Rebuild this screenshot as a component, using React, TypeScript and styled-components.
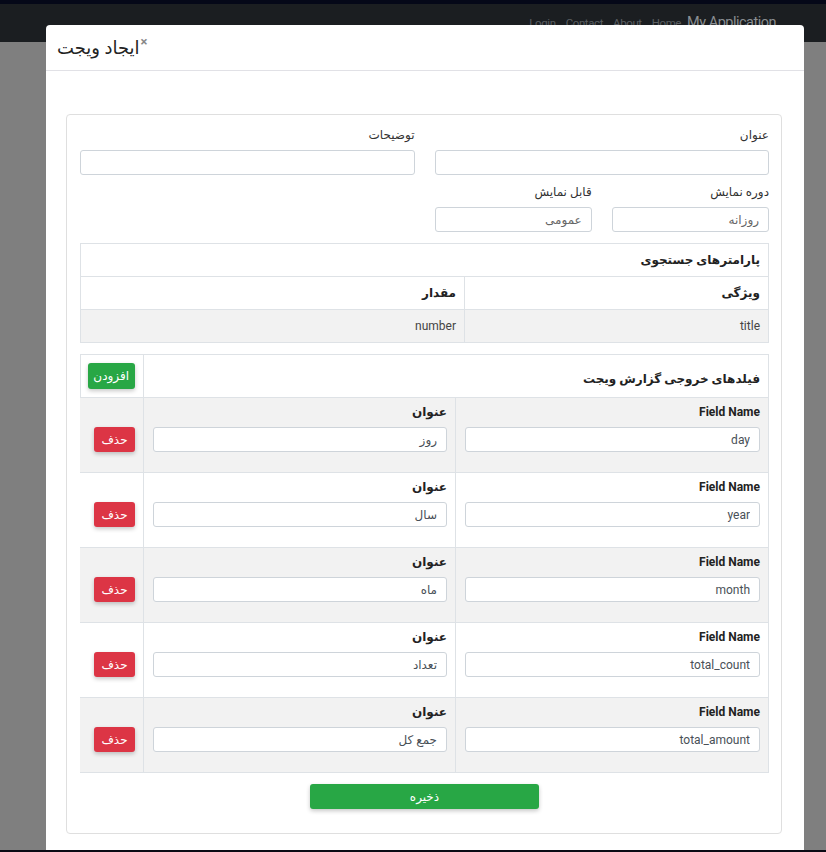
import styled, { createGlobalStyle } from "styled-components";

const GlobalStyle = createGlobalStyle`
  html, body {
    margin: 0;
    padding: 0;
    height: 852px;
    overflow: hidden;
    background: #7f7f7f;
    font-family: "Roboto", "DejaVu Sans", sans-serif;
  }
  * {
    box-sizing: border-box;
  }
`;

const outputFields = [
  { name: "day", title: "روز" },
  { name: "year", title: "سال" },
  { name: "month", title: "ماه" },
  { name: "total_count", title: "تعداد" },
  { name: "total_amount", title: "جمع کل" },
];

function App() {
  return (
    <>
      <GlobalStyle />
      <NavBar>
        <NavLinks>
          <NavLink>Login</NavLink>
          <NavLink>Contact</NavLink>
          <NavLink>About</NavLink>
          <NavLink>Home</NavLink>
          <Brand>My Application</Brand>
        </NavLinks>
      </NavBar>

      <Modal>
        <ModalHeader>
          <ModalTitle>ایجاد ویجت</ModalTitle>
          <CloseButton>×</CloseButton>
        </ModalHeader>

        <ModalBody dir="rtl">
          <Card>
            <FormGrid>
              <Field $span={2}>
                <Label>عنوان</Label>
                <Input />
              </Field>
              <Field $span={2}>
                <Label>توضیحات</Label>
                <Input />
              </Field>
              <Field>
                <Label>دوره نمایش</Label>
                <Input $muted defaultValue="روزانه" />
              </Field>
              <Field>
                <Label>قابل نمایش</Label>
                <Input $muted defaultValue="عمومی" />
              </Field>
            </FormGrid>

            <ParamTable>
              <ParamCaption>پارامترهای جستجوی</ParamCaption>
              <ParamCell $head>ویژگی</ParamCell>
              <ParamCell $head>مقدار</ParamCell>
              <ParamCell $striped>title</ParamCell>
              <ParamCell $striped>number</ParamCell>
            </ParamTable>

            <FieldsTable>
              <FieldsCaption>فیلدهای خروجی گزارش ویجت</FieldsCaption>
              <ActionCell $head>
                <AddButton>افزودن</AddButton>
              </ActionCell>

              {outputFields.map((item, index) => (
                <FieldRow key={item.name} $striped={index % 2 === 0}>
                  <RowCell>
                    <CellLabel>Field Name</CellLabel>
                    <Input defaultValue={item.name} />
                  </RowCell>
                  <RowCell>
                    <CellLabel>عنوان</CellLabel>
                    <Input defaultValue={item.title} />
                  </RowCell>
                  <ActionCell>
                    <DeleteButton>حذف</DeleteButton>
                  </ActionCell>
                </FieldRow>
              ))}
            </FieldsTable>

            <SaveRow>
              <SaveButton>ذخیره</SaveButton>
            </SaveRow>
          </Card>
        </ModalBody>
      </Modal>

      <BottomStrip />
    </>
  );
}

export default App;

const NavBar = styled.nav`
  height: 42px;
  background: #1b1e21;
  border-top: 4px solid #050818;
  display: flex;
  justify-content: flex-end;
  align-items: flex-start;
  padding: 10px 50px 0 0;
`;

const NavLinks = styled.div`
  display: flex;
  align-items: baseline;
  gap: 10px;
`;

const NavLink = styled.span`
  font-size: 11.5px;
  letter-spacing: -0.4px;
  color: #5a5e62;
`;

const Brand = styled.span`
  font-size: 14.5px;
  letter-spacing: -0.5px;
  color: #8a8e92;
  margin-left: -4px;
`;

const Modal = styled.div`
  position: absolute;
  left: 46px;
  top: 25px;
  width: 758px;
  height: 840px;
  background: #ffffff;
  border-radius: 4px 4px 0 0;
`;

const ModalHeader = styled.div`
  height: 46px;
  padding: 0 11px;
  display: flex;
  align-items: center;
  border-bottom: 1px solid #e1e1e6;
`;

const ModalTitle = styled.h5`
  margin: 0;
  font-size: 18px;
  font-weight: 500;
  color: #222;
`;

const CloseButton = styled.span`
  align-self: flex-start;
  margin-top: 10px;
  margin-left: 1px;
  font-size: 13px;
  font-weight: 700;
  color: #888;
  line-height: 1;
`;

const ModalBody = styled.div`
  padding: 43px 22px 0 20px;
`;

const Card = styled.div`
  border: 1px solid #dfdfdf;
  border-radius: 4px;
  padding: 12px 12px 24px 13px;
`;

const FormGrid = styled.div`
  display: grid;
  grid-template-columns: repeat(4, 1fr);
  column-gap: 20px;
  row-gap: 9px;
`;

const Field = styled.div<{ $span?: number }>`
  grid-column: span ${(p) => p.$span ?? 1};
  display: flex;
  flex-direction: column;
`;

const Label = styled.label`
  font-size: 12px;
  line-height: 16px;
  color: #333;
  margin-bottom: 7px;
`;

const Input = styled.input<{ $muted?: boolean }>`
  height: 25px;
  width: 100%;
  border: 1px solid #ced4da;
  border-radius: 3px;
  background: #fff;
  padding: 0 9px;
  font-family: inherit;
  font-size: 12px;
  color: ${(p) => (p.$muted ? "#666" : "#495057")};
  text-align: right;
  outline: none;
`;

const ParamTable = styled.div`
  margin-top: 11px;
  display: grid;
  grid-template-columns: 304px 1fr;
  border: 1px solid #dee2e6;
  border-bottom: none;
`;

const ParamCaption = styled.div`
  grid-column: 1 / -1;
  height: 33px;
  display: flex;
  align-items: center;
  padding: 0 8px;
  font-size: 12px;
  font-weight: 700;
  color: #222;
  border-bottom: 1px solid #dee2e6;
`;

const ParamCell = styled.div<{ $head?: boolean; $striped?: boolean }>`
  height: 33px;
  display: flex;
  align-items: center;
  padding: 0 8px;
  font-size: 12px;
  font-weight: ${(p) => (p.$head ? 700 : 400)};
  color: ${(p) => (p.$head ? "#222" : "#444")};
  background: ${(p) => (p.$striped ? "#f2f2f2" : "#fff")};
  border-bottom: 1px solid #dee2e6;

  &:nth-child(even) {
    border-left: 1px solid #dee2e6;
  }
`;

const FieldsTable = styled.div`
  margin-top: 11px;
  display: grid;
  grid-template-columns: 313px 312px 1fr;
  border: 1px solid #dee2e6;
  border-bottom: none;
`;

const FieldsCaption = styled.div`
  grid-column: span 2;
  height: 43px;
  display: flex;
  align-items: center;
  padding: 6px 8px 0;
  font-size: 12px;
  font-weight: 700;
  color: #222;
  border-bottom: 1px solid #dee2e6;
  border-left: 1px solid #dee2e6;
`;

const FieldRow = styled.div<{ $striped: boolean }>`
  grid-column: 1 / -1;
  display: grid;
  grid-template-columns: subgrid;
  height: 75px;
  background: ${(p) => (p.$striped ? "#f2f2f2" : "#fff")};
  border-bottom: 1px solid #dee2e6;
`;

const RowCell = styled.div`
  display: flex;
  flex-direction: column;
  padding: 6px 8px 0 9px;
  border-left: 1px solid #dee2e6;
`;

const CellLabel = styled.div`
  font-size: 12px;
  line-height: 16px;
  font-weight: 700;
  color: #222;
  margin-bottom: 7px;
`;

const ActionCell = styled.div<{ $head?: boolean }>`
  display: flex;
  align-items: flex-start;
  justify-content: flex-start;
  padding: ${(p) => (p.$head ? "8px 8px 0" : "29px 8px 0")};
  border-bottom: ${(p) => (p.$head ? "1px solid #dee2e6" : "none")};
`;

const Button = styled.button`
  border: none;
  border-radius: 3px;
  color: #fff;
  font-family: inherit;
  font-size: 12px;
  box-shadow: 0 2px 4px rgba(0, 0, 0, 0.22);
  cursor: pointer;
`;

const AddButton = styled(Button)`
  width: 47px;
  height: 26px;
  background: #28a745;
`;

const DeleteButton = styled(Button)`
  width: 41px;
  height: 25px;
  background: #dc3545;
`;

const SaveRow = styled.div`
  display: flex;
  justify-content: center;
  margin-top: 11px;
`;

const SaveButton = styled(Button)`
  width: 229px;
  height: 25px;
  background: #28a745;
`;

const BottomStrip = styled.div`
  position: fixed;
  left: 0;
  right: 0;
  bottom: 0;
  height: 2px;
  background: #0a0a14;
`;
